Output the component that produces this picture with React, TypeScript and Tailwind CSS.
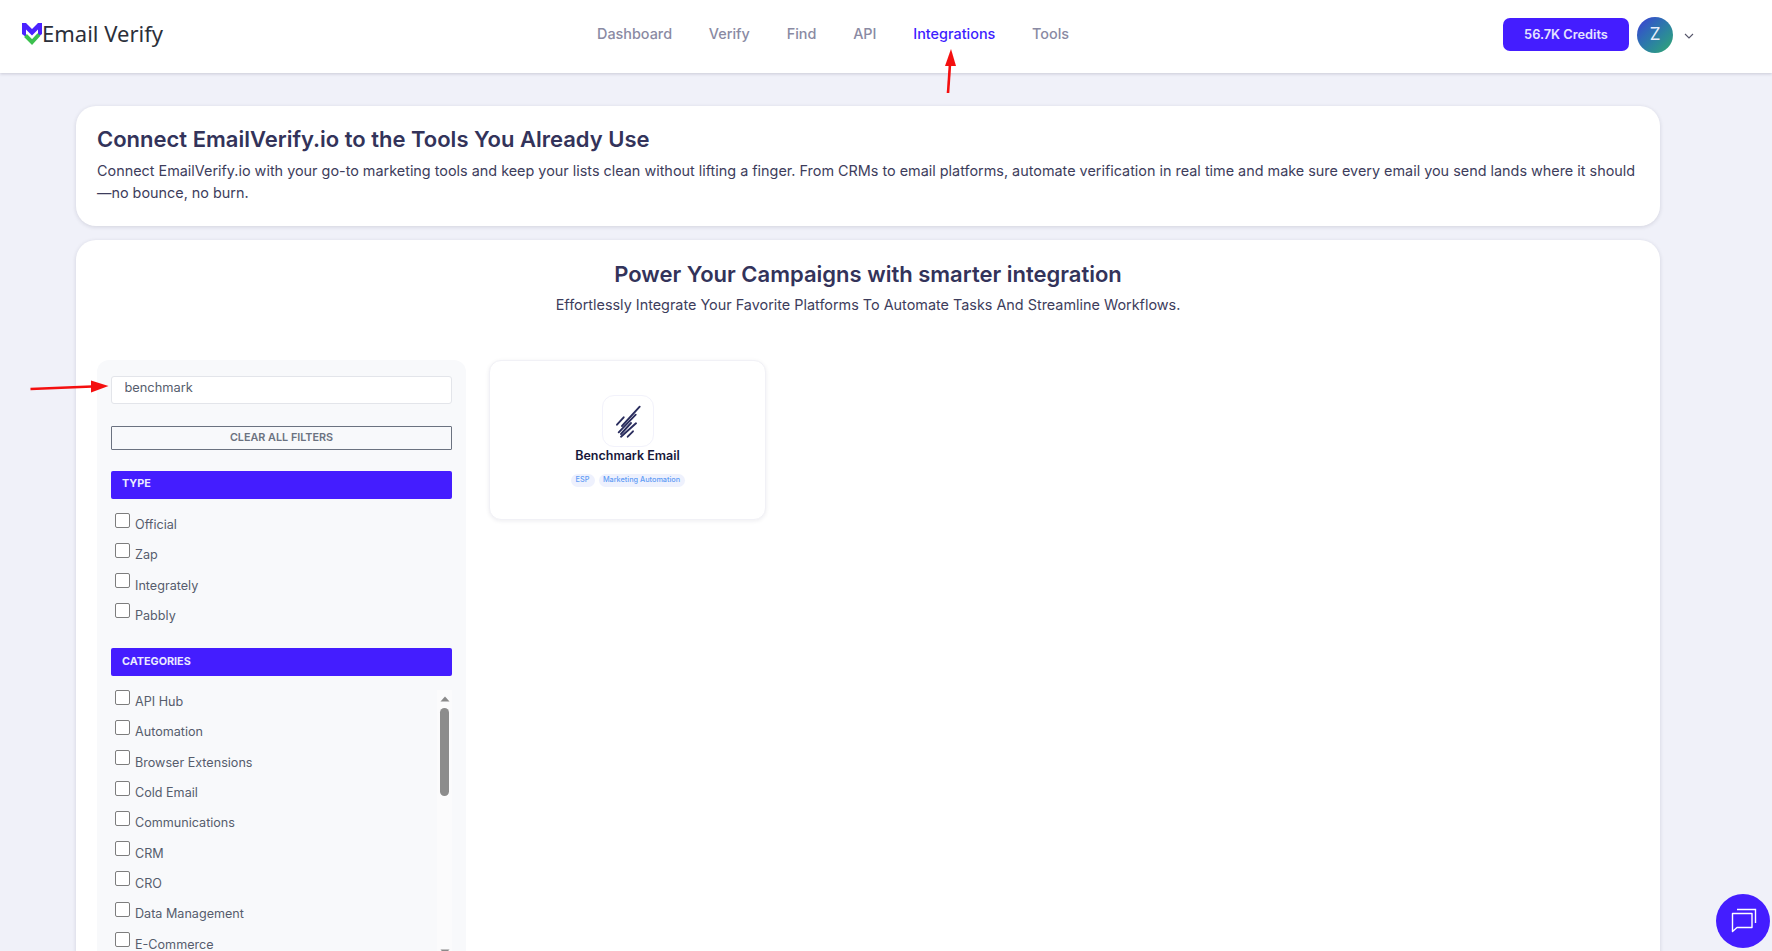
import React from "react";

const nav = [
  { t: "Dashboard", x: false },
  { t: "Verify", x: false },
  { t: "Find", x: false },
  { t: "API", x: false },
  { t: "Integrations", x: true },
  { t: "Tools", x: false },
];
const types = ["Official", "Zap", "Integrately", "Pabbly"];
const cats = ["API Hub", "Automation", "Browser Extensions", "Cold Email", "Communications", "CRM", "CRO", "Data Management", "E-Commerce"];

function Check({ label }: { label: string }) {
  return (
    <label className="flex items-start h-[30.3px]">
      <input type="checkbox" className="appearance-none w-[15px] h-[15px] rounded-[2px] border border-[#7d7d7d] bg-white shrink-0 ml-1" />
      <span className="ml-[5px] mt-[2.5px] text-[12.6px] leading-[19px] text-[#565d6d]">{label}</span>
    </label>
  );
}

function Logo() {
  return (
    <svg width="20" height="23" viewBox="0 0 20 23" className="shrink-0">
      <path d="M0 0H4L10 6L16 0H20V11L16 14V6.5L10 12.5L4 6.5V14L0 11Z" fill="#4a22ff" />
      <path d="M3.5 12.5L10 19L17 11.5" fill="none" stroke="#3cc04f" strokeWidth="4" />
    </svg>
  );
}

export default function App() {
  return (
    <div className="relative h-[951px] w-full overflow-hidden bg-[#f0f1f9] font-['Inter',sans-serif]">
      <header className="flex h-[73px] items-center bg-white pb-[4px] shadow-[0_1px_3px_rgba(30,30,60,0.18)]">
        <div className="ml-[22px] flex w-[575px] items-center">
          <Logo />
          <span className="mb-[3px] font-['Noto_Sans',sans-serif] text-[22px] leading-none text-[#2b2f3a]">Email Verify</span>
        </div>
        <nav className="mb-[1px] flex gap-[36.8px]">
          {nav.map((n) => (
            <a key={n.t} className={n.x ? "text-[14.4px] font-medium text-[#3d1dff]" : "text-[14.4px] font-medium text-[#8a8aa3]"}>
              {n.t}
            </a>
          ))}
        </nav>
        <div className="ml-auto flex items-center">
          <button className="h-[33px] w-[126px] rounded-[7px] bg-[#441dff] text-[12.8px] font-semibold text-[#e4e4ff]">56.7K Credits</button>
          <div className="ml-2 flex size-9 items-center justify-center rounded-full bg-gradient-to-br from-[#3d2fd6] to-[#35a96a] text-[17px] text-[#e8eefc]">Z</div>
          <svg width="10" height="6" viewBox="0 0 10 6" className="ml-[11px] mr-[78px] mt-[3px]">
            <path d="M1 1L5 5L9 1" fill="none" stroke="#55556a" strokeWidth="1.1" />
          </svg>
        </div>
      </header>

      <main className="mx-[76px] mt-[33px] w-[1584px]">
        <section className="h-[120px] rounded-[20px] bg-white px-[21px] pt-[17px] shadow-[0_1px_4px_rgba(30,30,60,0.14)]">
          <h1 className="text-[22px] font-semibold leading-[32px] text-[#33335a]">Connect EmailVerify.io to the Tools You Already Use</h1>
          <p className="mt-[5px] text-[14.4px] leading-[22px] text-[#3d3d5c]">
            Connect EmailVerify.io with your go-to marketing tools and keep your lists clean without lifting a finger. From CRMs to email platforms, automate verification in real time and make sure every email you send lands where it should —no bounce, no burn.
          </p>
        </section>

        <section className="mt-[14px] h-[800px] rounded-[20px] bg-white pt-[19px] shadow-[0_1px_4px_rgba(30,30,60,0.14)]">
          <h2 className="text-center text-[22px] font-semibold leading-[30px] text-[#33335a]">Power Your Campaigns with smarter integration</h2>
          <p className="mt-[5px] text-center text-[14.4px] leading-[22px] text-[#3d3d5c]">Effortlessly Integrate Your Favorite Platforms To Automate Tasks And Streamline Workflows.</p>

          <div className="mt-[44px] flex items-start pl-[21px]">
            <aside className="h-[700px] w-[369px] rounded-xl bg-[#f8f9fb] px-[14px] pt-[14px]">
              <input readOnly value="benchmark" className="h-[28px] w-full rounded-[3px] border border-[#e3e5ea] bg-white pl-[12.5px] pb-[4px] text-[12.8px] text-[#565d6d] outline-none" />
              <button className="mt-[22px] h-[24px] w-full rounded-[1px] border border-[#6b7280] pt-[1px] text-[10.8px] font-semibold text-[#6b7280]">CLEAR ALL FILTERS</button>
              <div className="mt-[21px] h-[28px] rounded-[2px] bg-[#441dff] pl-[11px] pt-[5px] text-[10.8px] font-bold leading-[16px] text-[#eaeaff]">TYPE</div>
              <div className="mt-[14px]">
                {types.map((t) => (
                  <Check key={t} label={t} />
                ))}
              </div>
              <div className="mt-[14px] h-[28px] rounded-[2px] bg-[#441dff] pl-[11px] pt-[6px] text-[10.8px] font-bold leading-[16px] text-[#eaeaff]">CATEGORIES</div>
              <div className="mt-[14px] flex h-[265px]">
                <div className="flex-1">
                  {cats.map((t) => (
                    <Check key={t} label={t} />
                  ))}
                </div>
                <div className="flex w-[15px] flex-col items-center bg-[#fbfbfc]">
                  <svg width="10" height="6" viewBox="0 0 10 6" className="mt-[6px]">
                    <path d="M5 0.5L9.5 5.5H0.5Z" fill="#8a8a8a" />
                  </svg>
                  <div className="mt-[6px] h-[88px] w-[9px] rounded-full bg-[#8c8c8c]" />
                  <svg width="10" height="6" viewBox="0 0 10 6" className="mt-auto">
                    <path d="M5 5.5L9.5 0.5H0.5Z" fill="#8a8a8a" />
                  </svg>
                </div>
              </div>
            </aside>

            <article className="ml-[23px] flex h-[160px] w-[277px] flex-col items-center rounded-xl border border-[#f1f1f6] bg-white pt-[34px] shadow-[0_1px_4px_rgba(30,30,60,0.08)]">
              <div className="size-[52px] rounded-xl border border-[#f2f2fb]">
                <svg width="50" height="50" viewBox="1 1 50 50">
                  <g stroke="#2a2d5e" strokeWidth="1.9" strokeLinecap="round">
                    <path d="M37.7 11.7L20 31" />
                    <path d="M21.7 22.3L15 29.7" />
                    <path d="M33.7 19.7L16.7 37.3" />
                    <path d="M29 28L19 39" />
                    <path d="M34 28.3L19 41.7" />
                    <path d="M31 36.3L25.7 41.7" />
                  </g>
                </svg>
              </div>
              <div className="text-[12.5px] font-semibold leading-[17px] text-[#17173a]">Benchmark Email</div>
              <div className="mt-[10px] flex gap-[4px]">
                <span className="flex h-[13px] w-[24px] items-center justify-center rounded-full bg-[#eef1fd] text-[7.3px] font-medium text-[#5f9cf5]">ESP</span>
                <span className="flex h-[13px] w-[86px] items-center justify-center rounded-full bg-[#eef1fd] text-[7.3px] font-medium text-[#5f9cf5]">Marketing Automation</span>
              </div>
            </article>
          </div>
        </section>
      </main>

      <button className="absolute left-[1716px] top-[894px] size-[54px] rounded-full bg-[#441dff]">
        <svg width="54" height="54" viewBox="0 0 54 54" fill="none" stroke="white" strokeWidth="1.4">
          <path d="M16.5 19.5H36V33.5H21L16.5 37.5Z" strokeLinejoin="round" />
          <path d="M21 15.5H39.5V29" />
        </svg>
      </button>

      <svg className="pointer-events-none absolute left-0 top-0" width="1772" height="951" viewBox="0 0 1772 951">
        <path d="M948 93L950 64" stroke="#f40f0f" strokeWidth="2.6" />
        <path d="M951 49L956 66H945Z" fill="#f40f0f" />
        <path d="M30.5 389L92 386.5" stroke="#f40f0f" strokeWidth="2.6" />
        <path d="M108.5 386L91 380.5V392.5Z" fill="#f40f0f" />
      </svg>
    </div>
  );
}
